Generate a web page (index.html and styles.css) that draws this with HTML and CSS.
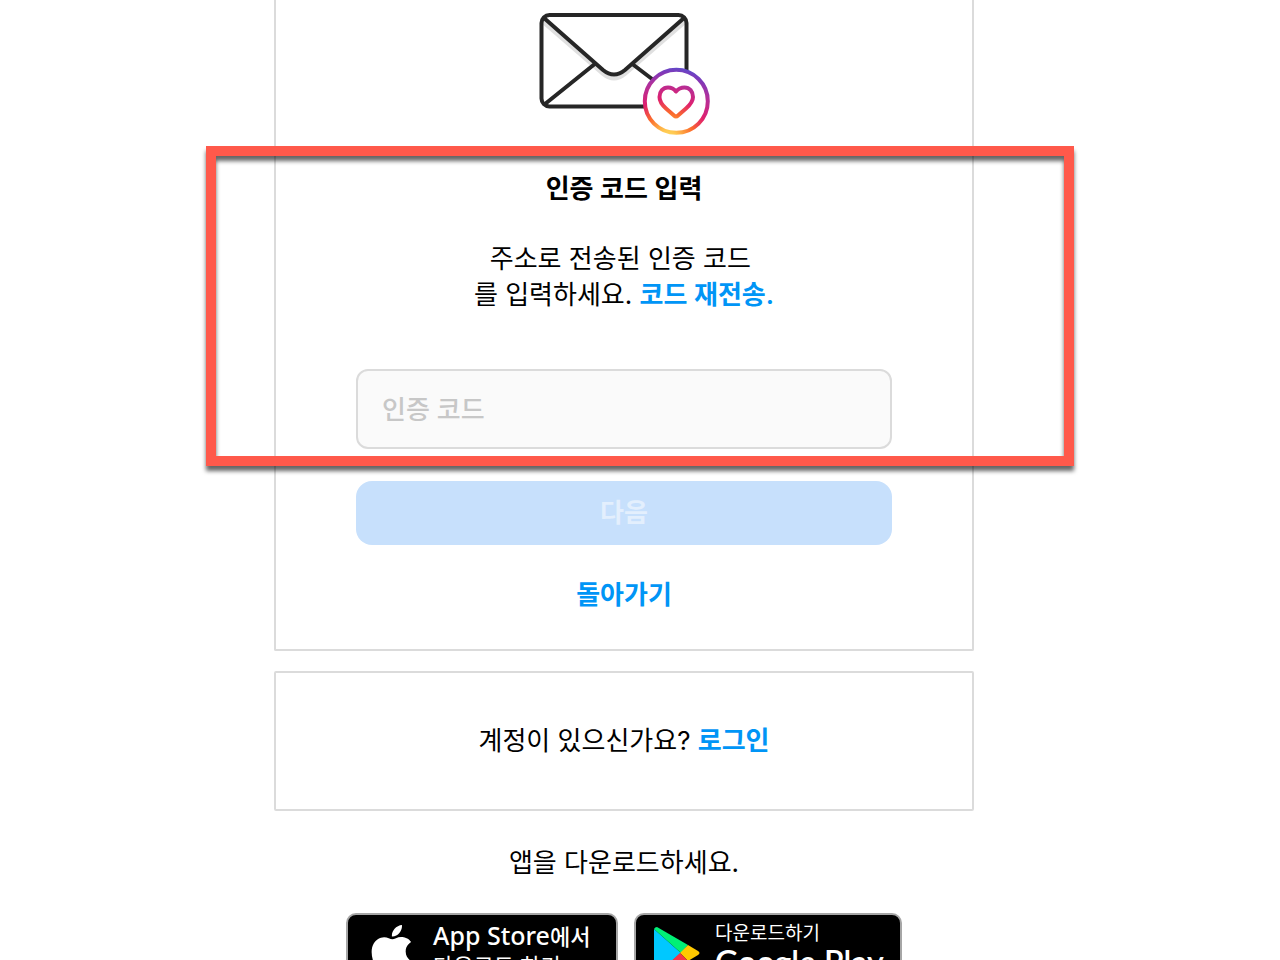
FILE: index.html
```html
<!DOCTYPE html>
<html lang="ko">
<head>
    <meta charset="UTF-8">
    <meta name="viewport" content="width=device-width, initial-scale=1.0">
    <title>인증 코드 입력</title>
    <link rel="stylesheet" href="styles.css">
</head>
<body>
    <main class="page">
        <form class="card verify">
            <svg class="mail-icon" viewBox="536 10 176 128" aria-hidden="true">
                <defs>
                    <radialGradient id="insta" gradientUnits="userSpaceOnUse" cx="668" cy="139" r="74">
                        <stop offset="0" stop-color="#ffdd66"/>
                        <stop offset="0.12" stop-color="#ffc850"/>
                        <stop offset="0.35" stop-color="#fb6a2c"/>
                        <stop offset="0.55" stop-color="#e0206e"/>
                        <stop offset="0.78" stop-color="#b0309c"/>
                        <stop offset="0.9" stop-color="#8038b8"/>
                        <stop offset="1" stop-color="#5550d0"/>
                    </radialGradient>
                </defs>
                <g fill="none" stroke="#262626" stroke-width="4">
                    <path stroke="#e0e0e0" d="M543 22 603 74Q614 83 625 74L685 22"/>
                    <rect x="541.5" y="15" width="145" height="91.5" rx="8"/>
                    <path d="M545 104 596 63M631 63 656 82"/>
                    <path d="M544 18 603 70Q614 79 625 70L684 18"/>
                </g>
                <circle cx="676.3" cy="101.3" r="31.5" fill="#fff" stroke="url(#insta)" stroke-width="4"/>
                <path fill="none" stroke="url(#insta)" stroke-width="4" stroke-linejoin="round" d="M676 91.500C673 87.500 669.500 87.500 668 87.500C663 87.500 659.500 91.500 659.500 97C659.500 101.500 661.500 104.500 666 108.500L674 115.500Q676 117.500 678 115.500L686 108.500C690.500 104.500 693 101.500 693 97C693 91.500 689.500 87.500 684.500 87.500C681 87.500 678.500 88.500 676 91.500Z"/>
            </svg>
            <h1>인증 코드 입력</h1>
            <p class="message">주소로 전송된 인증 코드&nbsp;<br>를 입력하세요. <a href="#">코드 재전송.</a></p>
            <input type="text" id="code" placeholder="인증 코드" aria-label="인증 코드">
            <button type="submit" disabled>다음</button>
            <a class="back" href="#">돌아가기</a>
        </form>

        <div class="card login">
            <p>계정이 있으신가요? <a href="#">로그인</a></p>
        </div>

        <p class="download">앱을 다운로드하세요.</p>
        <div class="stores">
            <a class="store apple" href="#">
                <svg viewBox="0 0 24 24" aria-hidden="true">
                    <path fill="#fff" d="M12.152 6.896c-.948 0-2.415-1.078-3.96-1.04-2.04.027-3.91 1.183-4.961 3.014-2.117 3.675-.546 9.103 1.519 12.09 1.013 1.454 2.208 3.09 3.792 3.039 1.52-.065 2.09-.987 3.935-.987 1.831 0 2.35.987 3.96.948 1.637-.026 2.676-1.48 3.676-2.948 1.156-1.688 1.636-3.325 1.662-3.415-.039-.013-3.182-1.221-3.22-4.857-.026-3.04 2.48-4.494 2.597-4.559-1.429-2.09-3.623-2.324-4.39-2.376-2-.156-3.675 1.09-4.61 1.09zM15.53 3.83c.843-1.012 1.4-2.427 1.245-3.83-1.207.052-2.662.805-3.532 1.818-.78.896-1.454 2.338-1.273 3.714 1.338.104 2.715-.688 3.559-1.701"/>
                </svg>
                <span class="store-text">
                    <span class="store-name">App Store<small>에서</small></span>
                    <span class="store-action">다운로드 하기</span>
                </span>
            </a>
            <a class="store google" href="#">
                <svg viewBox="0 0 46 52" aria-hidden="true">
                    <path fill="#00c8ff" d="M0 2 27 26 0 50Z"/>
                    <path fill="#00f076" d="M0 2Q1 0 3 0L34 18 27 26Z"/>
                    <path fill="#ffc900" d="M34 18 44 24Q47 26 44 28L34 34 26 26Z"/>
                    <path fill="#f63448" d="M26 26 34 34 3 52Q1 52 0 50Z"/>
                </svg>
                <span class="store-text">
                    <span class="store-action">다운로드하기</span>
                    <span class="store-name">Google Play</span>
                </span>
            </a>
        </div>
    </main>
    <div class="highlight"></div>
</body>
</html>
```
FILE: styles.css
```css
* {
    box-sizing: border-box;
}
body {
    position: relative;
    height: 100vh;
    margin: 0;
    overflow: hidden;
    background-color: #fff;
    color: #000;
    font-family: Inter, "Noto Sans CJK KR", sans-serif;
    font-size: 26px;
    line-height: 36px;
    text-align: center;
}
h1, p {
    margin: 0;
    font-size: 26px;
}
h1 {
    font-weight: 600;
}
a {
    color: #0095f6;
    font-weight: 600;
    text-decoration: none;
}
.page {
    padding-right: 32px;
}
.card {
    max-width: 700px;
    margin: 0 auto 20px;
    border: 2px solid #dbdbdb;
    border-radius: 2px;
}
.verify {
    display: flex;
    flex-direction: column;
    align-items: center;
    padding: 10px 80px 36px;
    border-top: none;
    border-radius: 0 0 2px 2px;
}
.mail-icon {
    width: 176px;
    height: 128px;
    margin-bottom: 33px;
}
.message {
    margin-top: 34px;
}
input {
    width: 100%;
    height: 80px;
    margin-top: 56px;
    padding: 0 24px;
    border: 2px solid #dbdbdb;
    border-radius: 12px;
    background-color: #fafafa;
    font: inherit;
}
input::placeholder {
    color: #c7c7c7;
    font-weight: 500;
    opacity: 1;
}
button {
    width: 100%;
    height: 64px;
    margin: 32px 0;
    padding: 0;
    border: none;
    border-radius: 16px;
    background-color: #c7e0fc;
    color: #e3effd;
    font: inherit;
    font-weight: 600;
}
.login {
    padding: 50px 20px;
}
.download {
    margin: 34px 0 32px;
}
.stores {
    display: flex;
    justify-content: center;
    gap: 16px;
}
.store {
    display: flex;
    align-items: flex-start;
    height: 80px;
    border: 2px solid #a6a6a6;
    border-radius: 10px;
    background-color: #000;
    color: #fff;
    font-weight: 400;
    text-align: left;
    white-space: nowrap;
}
.store-text span {
    display: block;
}
.apple {
    width: 272px;
    padding: 6px 0 0 19px;
}
.apple svg {
    width: 50px;
    height: 50px;
    margin: 4px 16px 0 0;
}
.apple .store-name {
    font-family: "Noto Sans", "Noto Sans CJK KR", sans-serif;
    font-size: 25px;
    font-weight: 500;
    line-height: 28px;
}
.apple small {
    font-size: 22px;
}
.apple .store-action {
    font-size: 22px;
    line-height: 32px;
}
.google {
    width: 268px;
    padding: 7px 0 0 18px;
}
.google svg {
    width: 46px;
    height: 52px;
    margin: 5px 15px 0 0;
}
.google .store-action {
    font-size: 19px;
    line-height: 24px;
}
.google .store-name {
    font-family: Lato, sans-serif;
    font-size: 32px;
    font-weight: 600;
    line-height: 32px;
}
/* red frame around the code step */
.highlight {
    position: absolute;
    top: 146px;
    left: 50%;
    width: 868px;
    height: 320px;
    margin-left: -434px;
    border: 10px solid #ff594b;
    filter: drop-shadow(0 5px 2px rgba(0, 0, 0, 0.6));
    pointer-events: none;
}
```
